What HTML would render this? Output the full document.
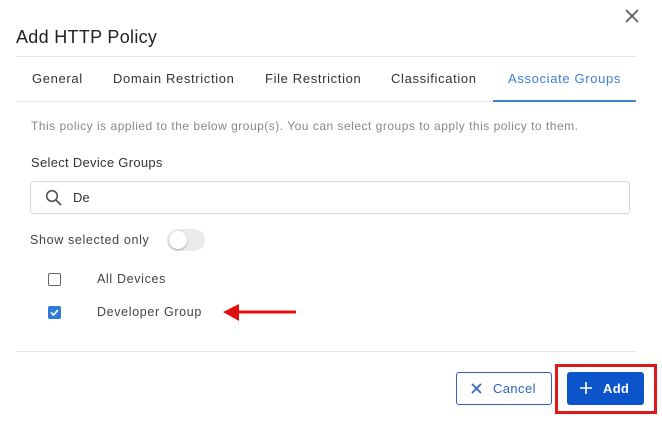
<!DOCTYPE html>
<html><head><style>
*{margin:0;padding:0;box-sizing:border-box}
body{width:662px;height:442px;background:#fff;font-family:"Liberation Sans",sans-serif;position:relative;overflow:hidden;color:#333}
.a{position:absolute;white-space:nowrap}
.t{letter-spacing:0.65px}
</style></head><body>
<svg class="a" style="left:625px;top:9px" width="14" height="14"><path d="M1 1L13 13M13 1L1 13" stroke="#555" stroke-width="1.6"/></svg>
<div class="a" style="left:16px;top:27px;font-size:18px;color:#222;letter-spacing:0.3px">Add HTTP Policy</div>
<div class="a" style="left:16px;top:56px;width:620px;height:1px;background:#e6e6e6"></div>
<div class="a t" style="left:32px;top:71px;font-size:13px;color:#333">General</div>
<div class="a t" style="left:113px;top:71px;font-size:13px;color:#333">Domain Restriction</div>
<div class="a t" style="left:265px;top:71px;font-size:13px;color:#333">File Restriction</div>
<div class="a t" style="left:391px;top:71px;font-size:13px;color:#333">Classification</div>
<div class="a t" style="left:508px;top:71px;font-size:13px;color:#3d7fd4">Associate Groups</div>
<div class="a" style="left:16px;top:101px;width:620px;height:1px;background:#e6e6e6"></div>
<div class="a" style="left:493px;top:100px;width:143px;height:2px;background:#3d7fd4"></div>
<div class="a" style="left:31px;top:119px;font-size:12px;color:#888;letter-spacing:0.5px">This policy is applied to the below group(s). You can select groups to apply this policy to them.</div>
<div class="a" style="left:31px;top:155px;font-size:13px;color:#333;letter-spacing:0.3px">Select Device Groups</div>
<div class="a" style="left:30px;top:181px;width:600px;height:33px;border:1px solid #d8d8d8;border-radius:3px"></div>
<svg class="a" style="left:45px;top:189px" width="18" height="18"><circle cx="7" cy="7" r="5.3" fill="none" stroke="#555" stroke-width="1.6"/><path d="M11 11L16 16" stroke="#555" stroke-width="1.8"/></svg>
<div class="a" style="left:73px;top:190px;font-size:13px;color:#333">De</div>
<div class="a t" style="left:30px;top:233px;font-size:12.5px;color:#444">Show selected only</div>
<div class="a" style="left:167px;top:229px;width:38px;height:22px;border-radius:11px;background:#ebebeb"></div>
<div class="a" style="left:169px;top:231px;width:18px;height:18px;border-radius:9px;background:#fff;box-shadow:0 1px 2px rgba(0,0,0,.3)"></div>
<div class="a" style="left:48px;top:273px;width:13px;height:13px;border:1.5px solid #666;border-radius:2px"></div>
<div class="a t" style="left:97px;top:272px;font-size:12.5px;color:#444">All Devices</div>
<div class="a" style="left:48px;top:306px;width:13px;height:13px;background:#2e7ad6;border-radius:2px"></div>
<svg class="a" style="left:48px;top:306px" width="13" height="13"><path d="M3 6.5L5.5 9L10 4" stroke="#fff" stroke-width="1.7" fill="none"/></svg>
<div class="a t" style="left:97px;top:305px;font-size:12.5px;color:#444">Developer Group</div>
<svg class="a" style="left:222px;top:302px" width="76" height="22"><path d="M14 10H74" stroke="#e01010" stroke-width="3"/><path d="M1 10L17 2V19Z" fill="#e01010"/></svg>
<div class="a" style="left:16px;top:351px;width:620px;height:1px;background:#e6e6e6"></div>
<div class="a" style="left:456px;top:372px;width:96px;height:33px;border:1px solid #2b63b8;border-radius:3px"></div>
<svg class="a" style="left:471px;top:383px" width="11" height="11"><path d="M1 1L10 10M10 1L1 10" stroke="#2b63b8" stroke-width="1.6"/></svg>
<div class="a" style="left:493px;top:381px;font-size:13px;color:#2b63b8;letter-spacing:0.4px">Cancel</div>
<div class="a" style="left:555px;top:364px;width:102px;height:50px;border:3px solid #e01818"></div>
<div class="a" style="left:567px;top:372px;width:77px;height:33px;background:#0b54c9;border-radius:3px"></div>
<svg class="a" style="left:580px;top:382px" width="12" height="12"><path d="M6 0V12M0 6H12" stroke="#fff" stroke-width="1.6"/></svg>
<div class="a" style="left:603px;top:381px;font-size:13px;color:#fff;font-weight:bold;letter-spacing:0.3px">Add</div>
</body></html>
